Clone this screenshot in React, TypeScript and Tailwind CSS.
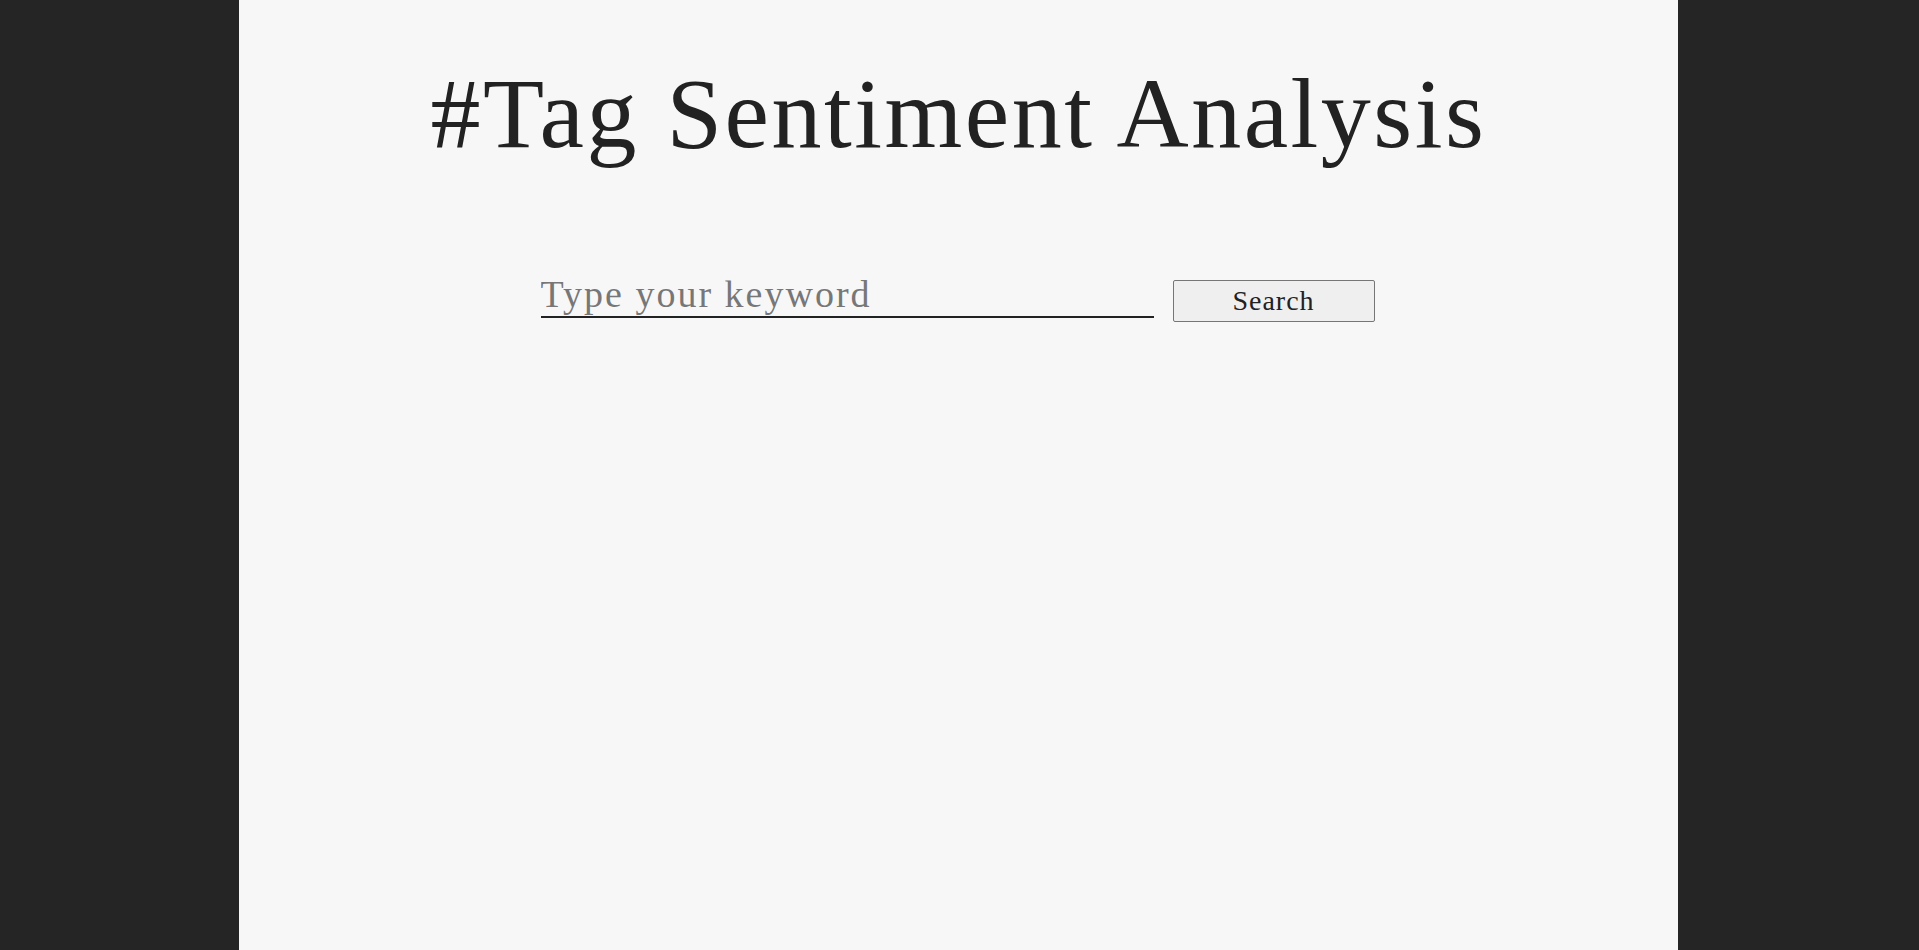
import { useState } from 'react';

const serif = "font-['Liberation_Serif','Times_New_Roman',serif]";

export default function App() {
  const [keyword, setKeyword] = useState('');

  return (
    <div className="min-h-screen bg-[#252525]">
      <div className={`ml-[239px] min-h-screen w-[1439px] bg-[#f7f7f7] text-[#222222] ${serif}`}>
        <h1 className="pt-[64px] text-center text-[100px] leading-[100px] tracking-[2.5px] font-normal">
          #Tag Sentiment Analysis
        </h1>

        <form
          className="mt-[109px] flex items-start justify-center gap-[19px] pr-[2px]"
          onSubmit={(e) => e.preventDefault()}
        >
          <input
            type="text"
            value={keyword}
            onChange={(e) => setKeyword(e.target.value)}
            placeholder="Type your keyword"
            className={`h-[45px] w-[613px] border-b-2 border-[#222222] bg-transparent p-0 text-[38px] tracking-[2px] text-[#222222] outline-none placeholder:text-[#777777] ${serif}`}
          />
          <button
            type="submit"
            className={`mt-[7px] h-[42px] w-[202px] rounded-[2px] border border-[#767676] bg-[#efefef] text-[28px] leading-none tracking-[1px] text-[#222222] ${serif}`}
          >
            Search
          </button>
        </form>
      </div>
    </div>
  );
}
